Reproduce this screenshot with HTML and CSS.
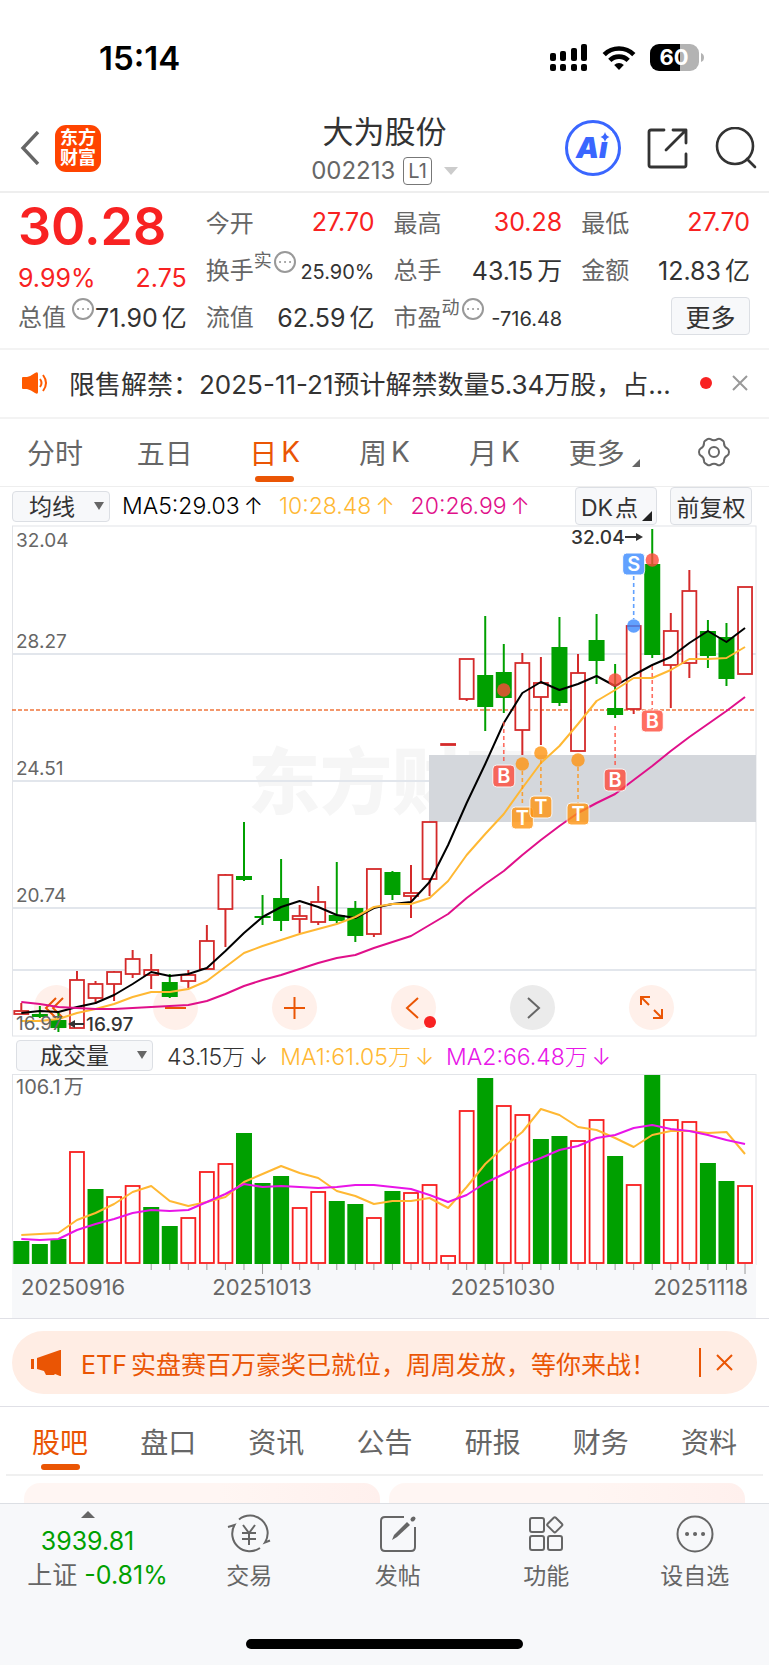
FILE: index.html
```html
<!DOCTYPE html>
<html lang="zh-CN">
<head>
  <meta charset="UTF-8" />
  <meta name="viewport" content="width=device-width, initial-scale=1" />
  <title>大为股份 002213</title>
  <link rel="stylesheet" href="styles.css">
</head>
<body>
  <!-- Status bar -->
  <div class="status-bar">
    <span class="status-time">15:14</span>
    <div class="status-icons">
      <svg width="38" height="28" viewBox="0 0 38 28">
        <rect x="0" y="9" width="6" height="8" rx="2"/><rect x="10" y="7" width="6" height="10" rx="2"/>
        <rect x="21" y="4" width="6" height="13" rx="2"/><rect x="31" y="0" width="6" height="17" rx="2"/>
        <rect x="0" y="20" width="6" height="7" rx="2"/><rect x="10" y="20" width="6" height="7" rx="2"/>
        <rect x="21" y="20" width="6" height="7" rx="2"/><rect x="31" y="20" width="6" height="7" rx="2"/>
      </svg>
      <svg width="34" height="26" viewBox="0 0 34 26" fill="none" stroke="#000" stroke-width="4.6">
        <path d="M2.2 9.6a21 21 0 0 1 29.6 0"/><path d="M7.8 15.4a13 13 0 0 1 18.4 0"/>
        <path d="M17 25l-4.8-5a7 7 0 0 1 9.6 0z" fill="#000" stroke="none"/>
      </svg>
      <svg width="54" height="28" viewBox="0 0 54 28">
        <path d="M9 0h21v27H9a9 9 0 0 1-9-9V9a9 9 0 0 1 9-9z"/>
        <path d="M30 0h10a9 9 0 0 1 9 9v9a9 9 0 0 1-9 9H30z" fill="#b3b3b3"/>
        <path d="M51 9q3 1 3 4.500t-3 4.500z" fill="#b3b3b3"/>
        <text class="battery-text" x="24" y="21" text-anchor="middle">60</text>
      </svg>
    </div>
  </div>

  <!-- Header -->
  <header class="header">
    <div class="header-left">
      <button class="icon-btn" aria-label="返回">
        <svg width="20" height="34" viewBox="0 0 20 34" fill="none" stroke="#666" stroke-width="3.400"><path d="M18 1L3 17l15 16"/></svg>
      </button>
      <div class="logo"><span>东方</span><span>财富</span></div>
    </div>
    <div class="header-title">
      <h1>大为股份</h1>
      <div class="stock-code">002213 <span class="level">L1</span><i class="caret"></i></div>
    </div>
    <div class="header-right">
      <button class="icon-btn" aria-label="Ai">
        <svg width="56" height="56" viewBox="0 0 56 56">
          <circle cx="28" cy="28" r="26.500" fill="#fff" stroke="#3a66ff" stroke-width="3"/>
          <text class="ai-text" x="11" y="38">Ai</text>
          <rect x="34" y="11" width="13" height="11" fill="#fff"/>
          <path d="M40 12q1 4 4.500 5-3.500 1-4.500 5-1-4-4.500-5 3.500-1 4.500-5z" fill="#3a66ff"/>
        </svg>
      </button>
      <button class="icon-btn" aria-label="分享">
        <svg width="42" height="42" viewBox="0 0 42 42" fill="none" stroke="#333" stroke-width="2.800" stroke-linecap="round" stroke-linejoin="round">
          <path d="M17 3H4q-2 0-2 2v33q0 2 2 2h33q2 0 2-2V27M26 3h13v13M39 3L19 23"/>
        </svg>
      </button>
      <button class="icon-btn" aria-label="搜索">
        <svg width="42" height="42" viewBox="0 0 42 42" fill="none" stroke="#333" stroke-width="2.600" stroke-linecap="round">
          <circle cx="20" cy="19" r="18"/><path d="M32 32l8 8"/>
        </svg>
      </button>
    </div>
  </header>

  <!-- Quote -->
  <section class="quote">
    <div class="price-box">
      <div class="price">30.28</div>
      <div class="change"><span>9.99%</span><span>2.75</span></div>
    </div>
    <div class="cell"><span class="name">今开</span><span class="red">27.70</span></div>
    <div class="cell"><span class="name">最高</span><span class="red">30.28</span></div>
    <div class="cell"><span class="name">最低</span><span class="red">27.70</span></div>
    <div class="cell"><span class="name">换手<sup>实</sup><svg class="tip" viewBox="0 0 22 22"><circle cx="11" cy="11" r="10"/><path d="M6 11h.1M11 11h.1M16 11h.1"/></svg></span><span class="small">25.90%</span></div>
    <div class="cell"><span class="name">总手</span><span>43.15<span class="unit">万</span></span></div>
    <div class="cell"><span class="name">金额</span><span>12.83<span class="unit">亿</span></span></div>
    <div class="cell"><span class="name">总值<svg class="tip tip-far" viewBox="0 0 22 22"><circle cx="11" cy="11" r="10"/><path d="M6 11h.1M11 11h.1M16 11h.1"/></svg></span><span>71.90<span class="unit">亿</span></span></div>
    <div class="cell"><span class="name">流值</span><span>62.59<span class="unit">亿</span></span></div>
    <div class="cell"><span class="name">市盈<sup>动</sup><svg class="tip" viewBox="0 0 22 22"><circle cx="11" cy="11" r="10"/><path d="M6 11h.1M11 11h.1M16 11h.1"/></svg></span><span class="small">-716.48</span></div>
    <div class="cell cell-end"><button class="box-btn more-btn">更多</button></div>
  </section>

  <!-- Notice -->
  <section class="notice">
    <svg width="26" height="22" viewBox="0 0 26 22">
      <path d="M0 6q0-1 1-1h4q4-1 8-4 3-2 3 1v18q0 3-3 1-4-3-8-4H1q-1 0-1-1z" fill="#ff5a00"/>
      <path d="M18 7q3 4 0 8M21 3q6 8 0 16" fill="none" stroke="#ff5a00" stroke-width="2"/>
    </svg>
    <p class="notice-text">限售解禁：2025-11-21预计解禁数量5.34万股，占...</p>
    <i class="dot"></i>
    <button class="icon-btn" aria-label="关闭">
      <svg width="16" height="16" viewBox="0 0 16 16" stroke="#999" stroke-width="2"><path d="M1 1l14 14M15 1L1 15"/></svg>
    </button>
  </section>

  <!-- Period tabs -->
  <nav class="tabs period-tabs">
    <button class="tab">分时</button>
    <button class="tab">五日</button>
    <button class="tab active">日<span class="unit">K</span></button>
    <button class="tab">周<span class="unit">K</span></button>
    <button class="tab">月<span class="unit">K</span></button>
    <button class="tab">更多<i class="corner"></i></button>
    <button class="tab" aria-label="设置">
      <svg width="32" height="32" viewBox="0 0 32 32" fill="none" stroke="#666" stroke-width="2">
        <path d="M12.500 3.200Q16 5.500 19.500 3.200q1.500-1 3 0l2.500 1.600q1 .7 1 2.400 0 3.500 3.200 5.200 1.800 1 1.800 3.600t-1.800 3.600Q26 21.300 26 24.800q0 1.700-1 2.400l-2.500 1.600q-1.500 1-3 0Q16 26.500 12.500 28.800q-1.500 1-3 0L7 27.200q-1-.7-1-2.400 0-3.500-3.200-5.200Q1 18.600 1 16t1.800-3.600Q6 10.700 6 7.200q0-1.700 1-2.400l2.500-1.600q1.500-1 3 0z"/>
        <circle cx="16" cy="16" r="5"/>
      </svg>
    </button>
  </nav>

  <!-- K-line chart -->
  <section class="chart-section">
    <div class="indicator-row">
      <div class="select-box ma-select">
        <select aria-label="均线"><option>均线</option></select>
      </div>
      <span class="ma ma5">MA5:29.03<b>↑</b></span>
      <span class="ma yellow">10:28.48<b>↑</b></span>
      <span class="ma pink">20:26.99<b>↑</b></span>
      <div class="indicator-btns">
        <button class="box-btn dk-btn">DK<span class="unit">点</span><i class="corner"></i></button>
        <button class="box-btn">前复权</button>
      </div>
    </div>
    <div class="kline">
      <div class="chart-tools">
        <button class="tool" aria-label="快退"><svg viewBox="0 0 45 45"><path d="M22 13L12 23l10 10M29 13L19 23l10 10"/></svg></button>
        <button class="tool" aria-label="缩小"><svg viewBox="0 0 45 45"><path d="M12 23h21"/></svg></button>
        <button class="tool" aria-label="放大"><svg viewBox="0 0 45 45"><path d="M12 23h21M22.500 12v22"/></svg></button>
        <button class="tool" aria-label="上一个"><svg viewBox="0 0 45 45"><path d="M27 13L16 23l11 10"/></svg><i class="dot"></i></button>
        <button class="tool gray" aria-label="下一个"><svg viewBox="0 0 45 45"><path d="M18 13l11 10-11 10"/></svg></button>
        <button class="tool" aria-label="全屏"><svg viewBox="0 0 45 45"><path d="M12 20v-8h9M12 12l8 8M33 24v9h-9M33 33l-8-8"/></svg></button>
      </div>
      <svg id="kline" viewBox="12 525 745 512"></svg>
    </div>

    <div class="indicator-row volume-row">
      <div class="select-box vol-select">
        <select aria-label="成交量"><option>成交量</option></select>
      </div>
      <span class="ma">43.15万<b>↓</b></span>
      <span class="ma yellow">MA1:61.05万<b>↓</b></span>
      <span class="ma magenta">MA2:66.48万<b>↓</b></span>
    </div>
    <svg id="volume" viewBox="12 1074 745 244"></svg>
  </section>

  <!-- Promo -->
  <section class="promo">
    <div class="promo-bar">
      <svg width="30" height="26" viewBox="0 0 30 26" fill="#ea5504">
        <path d="M0 9h3v10H0zM6 8L29 0h1v26h-1l-5-2-1 1h-8l-2-4-7-2z"/>
      </svg>
      <a class="promo-text" href="#">ETF<span class="unit">实盘赛百万豪奖已就位，周周发放，等你来战！</span></a>
      <button class="icon-btn promo-close" aria-label="关闭">
        <svg width="17" height="17" viewBox="0 0 17 17" stroke="#ea5504" stroke-width="2"><path d="M1 1l15 15M16 1L1 16"/></svg>
      </button>
    </div>
  </section>

  <!-- Info tabs -->
  <nav class="tabs info-tabs">
    <button class="tab active">股吧</button>
    <button class="tab">盘口</button>
    <button class="tab">资讯</button>
    <button class="tab">公告</button>
    <button class="tab">研报</button>
    <button class="tab">财务</button>
    <button class="tab">资料</button>
  </nav>
  <div class="cards"><div class="card"></div><div class="card"></div></div>

  <!-- Bottom bar -->
  <footer class="bottom">
    <nav class="bottom-nav">
      <button class="index-box">
        <i class="caret-up"></i>
        <span class="green">3939.81</span>
        <span class="index-change">上证 <em class="green">-0.81%</em></span>
      </button>
      <button class="nav-item">
        <svg width="44" height="40" viewBox="0 0 44 40" fill="none" stroke="#666" stroke-width="2">
          <path d="M12 5.500A17.600 17.600 0 0 1 38 28.500l5-2M33 34A17.600 17.600 0 0 1 7.500 11L1 13"/>
          <path d="M16 11l6 8 6-8M15 19h14M15 25h14M22 19v12"/>
        </svg>
        <span>交易</span>
      </button>
      <button class="nav-item">
        <svg width="40" height="40" viewBox="0 0 40 40" fill="none" stroke="#666" stroke-width="2">
          <path d="M26 3H7q-4 0-4 4v26q0 4 4 4h26q4 0 4-4V13"/>
          <path d="M34.500 5.500l1-1" stroke-width="4" stroke-linecap="round"/><path d="M14 26l2-5L29 8l3 3-13 12z" fill="#666" stroke="none"/>
        </svg>
        <span>发帖</span>
      </button>
      <button class="nav-item">
        <svg width="40" height="40" viewBox="0 0 40 40" fill="none" stroke="#666" stroke-width="2">
          <rect x="4" y="4" width="14" height="14" rx="2"/><rect x="4" y="22" width="14" height="14" rx="2"/>
          <rect x="22" y="22" width="14" height="14" rx="2"/><rect x="23" y="5" width="11.500" height="11.500" rx="1.500" transform="rotate(45 28.700 10.800)"/>
        </svg>
        <span>功能</span>
      </button>
      <button class="nav-item">
        <svg width="40" height="40" viewBox="0 0 40 40" fill="none" stroke="#666" stroke-width="2">
          <circle cx="20" cy="20" r="17.500"/><path d="M12 20h.1M20 20h.1M28 20h.1" stroke-width="4" stroke-linecap="round"/>
        </svg>
        <span>设自选</span>
      </button>
    </nav>
    <div class="home-bar"></div>
  </footer>

  <script src="chart.js"></script>
</body>
</html>
```

FILE: styles.css
```css
* {
  box-sizing: border-box;
}

body {
  margin: 0;
  background: #fff;
  color: #333;
  font-family: Inter, "Noto Sans CJK SC", sans-serif;
  font-size: 25px;
}

button {
  padding: 0;
  border: none;
  background: none;
  color: inherit;
  font: inherit;
  cursor: pointer;
}

svg {
  display: block;
  flex-shrink: 0;
}

.icon-btn { display: flex; align-items: center; }
.red { color: #f82222; }
.green { color: #00a000; font-style: normal; }
.yellow { color: #ffb833; }
.pink { color: #e0108a; }
.magenta { color: #e815e8; }
.unit { margin-left: 4px; }

/* Status bar */
.status-bar {
  display: flex;
  justify-content: space-between;
  align-items: center;
  height: 112px;
  padding: 3px 65px 0 99px;
}
.status-time { font-size: 33px; font-weight: 600; color: #000; }
.status-icons { display: flex; align-items: center; gap: 14px; }
.battery-text { font-size: 22px; font-weight: 700; fill: #fff; }

/* Header */
.header {
  display: grid;
  grid-template-columns: 1fr auto 1fr;
  align-items: start;
  height: 81px;
  padding: 0 12px;
  border-bottom: 2px solid #eee;
}
.header-left, .header-right { display: flex; align-items: center; height: 72px; }
.header-left { gap: 15px; padding-left: 8px; }
.header-right { justify-content: flex-end; gap: 26px; }
.logo {
  display: flex;
  flex-direction: column;
  justify-content: center;
  align-items: center;
  width: 46px;
  height: 47px;
  border-radius: 11px;
  background: #ff4400;
  color: #fff;
  font-size: 18px;
  font-weight: 700;
  line-height: 20px;
}
.header-title h1 { margin: 0; font-size: 31px; font-weight: 400; line-height: 40px; text-align: center; }
.stock-code {
  display: flex;
  align-items: center;
  justify-content: center;
  gap: 8px;
  font-size: 24px;
  line-height: 38px;
  color: #666;
}
.level { padding: 0 4px; border: 1px solid #777; border-radius: 4px; font-size: 20px; line-height: 26px; }
.caret { margin-left: 4px; border: 7px solid transparent; border-top: 8px solid #ccc; border-bottom: 0; }
.ai-text { font-size: 29px; font-weight: 900; font-style: italic; fill: #3a66ff; }

/* Quote */
.quote {
  display: grid;
  grid-template-columns: repeat(4, 1fr);
  grid-auto-rows: 47px;
  column-gap: 19px;
  padding: 5px 19px 9px 18px;
  border-bottom: 2px solid #f3f3f3;
}
.price-box { grid-row: span 2; color: #f82222; }
.price { font-size: 52px; font-weight: 600; line-height: 57px; }
.change { display: flex; justify-content: space-between; line-height: 46px; }
.cell { display: flex; justify-content: space-between; align-items: center; white-space: nowrap; }
.cell-end { justify-content: flex-end; }
.name { display: flex; align-items: center; color: #666; font-size: 24px; }
.name sup { align-self: flex-start; margin-right: 2px; font-size: 18px; line-height: 20px; }
.name .tip { align-self: flex-start; width: 22px; height: 22px; fill: none; stroke: #999; stroke-width: 2; stroke-linecap: round; }
.name .tip-far { margin-left: 6px; }
.small { padding-top: 6px; font-size: 20px; }
.box-btn {
  position: relative;
  height: 38px;
  border: 1px solid #dcdfe4;
  border-radius: 4px;
  background: #f7f8fa;
}
.more-btn { width: 79px; }

/* Notice */
.notice {
  display: flex;
  align-items: center;
  height: 69px;
  padding: 0 21px 2px 22px;
  border-bottom: 2px solid #f3f3f3;
}
.notice-text {
  flex: 1;
  margin: 0 20px 0 21px;
  font-size: 26px;
  overflow: hidden;
  white-space: nowrap;
}
.dot { width: 12px; height: 12px; margin-right: 20px; border-radius: 50%; background: #f82222; }

/* Tabs */
.tabs { display: grid; grid-template-columns: repeat(7, 1fr); height: 69px; }
.tab {
  position: relative;
  display: flex;
  justify-content: center;
  align-items: center;
  color: #666;
  font-size: 28px;
}
.tab.active { color: #ea5504; }
.tab.active::after {
  content: "";
  position: absolute;
  bottom: 4px;
  width: 39px;
  height: 6px;
  border-radius: 3px;
  background: #ea5504;
}
.period-tabs { height: 68px; border-bottom: 1px solid #eee; }
.period-tabs .tab { padding-bottom: 2px; }
.corner { border: 4px solid #666; border-top-color: transparent; border-left-color: transparent; }
.tab .corner { align-self: flex-end; margin: 0 0 17px 7px; }
.info-tabs { margin: 0 6px; border-bottom: 2px solid #f0f0f0; }

/* Charts */
.chart-section { padding: 0 12px; border-bottom: 1px solid #e0e0e6; }
.indicator-row { display: flex; align-items: center; height: 38px; }
.select-box { position: relative; height: 31px; margin-right: 12px; }
.select-box select {
  width: 100%;
  height: 100%;
  padding: 0 24px 0 16px;
  border: 1px solid #dcdfe4;
  border-radius: 4px;
  background: #f7f8fa;
  color: #333;
  font: inherit;
  font-size: 23px;
  line-height: 28px;
  appearance: none;
}
.select-box::after {
  content: "";
  position: absolute;
  right: 6px;
  top: 11px;
  border: 5px solid transparent;
  border-top: 8px solid #666;
  border-bottom: 0;
}
.ma-select { width: 98px; }
.vol-select { width: 137px; margin: 0 14px 0 4px; }
.vol-select select { padding-left: 23px; }
.ma { margin-right: 16px; font-size: 23px; font-weight: 300; white-space: nowrap; }
.ma b { margin-left: 4px; font-weight: 300; }
.ma5 { color: #000; }
.volume-row { height: 37px; padding-bottom: 1px; }
.volume-row .ma { margin-right: 12px; }
.indicator-btns { display: flex; gap: 13px; margin-left: auto; padding-right: 5px; }
.indicator-btns .box-btn { width: 82px; font-size: 23px; }
.dk-btn { text-align: left; padding-left: 5px; }
.dk-btn .unit { margin-left: 2px; }
.dk-btn .corner { position: absolute; right: 4px; bottom: 3px; border-width: 5px; border-right-color: #222; border-bottom-color: #222; }
.kline { position: relative; }
#kline, #volume { position: relative; width: 100%; pointer-events: none; }
.chart-tools {
  position: absolute;
  left: 3%;
  bottom: 7px;
  display: flex;
  gap: 74px;
}
.tool { position: relative; width: 45px; height: 45px; border-radius: 50%; background: #fff0ea; }
.tool svg { fill: none; stroke: #ea5504; stroke-width: 2; }
.tool.gray { background: #ebebeb; }
.tool.gray svg { stroke: #666; }
.tool .dot { position: absolute; right: 0; bottom: 2px; margin: 0; }
.frame { fill: none; stroke: #e2e4e8; }
.grid { stroke: #e2e6ec; stroke-width: 2; }
.axis-label { fill: #666; font-size: 19px; }
.volume-label { fill: #666; font-size: 20px; }
.date-label { fill: #666; font-size: 22px; }
.peak-label { fill: #333; font-size: 19px; font-weight: 500; }
.watermark { fill: #f6f6f6; font-size: 72px; font-weight: 900; }
.marker { fill: #fff; font-size: 20px; font-weight: 600; }

/* Promo */
.promo { padding: 12px; border-bottom: 1px solid #e0e0e6; }
.promo-bar {
  display: flex;
  align-items: center;
  height: 63px;
  padding: 0 24px 0 19px;
  border-radius: 32px;
  background: #ffede4;
}
.promo-text { flex: 1; margin-left: 20px; color: #ea5504; text-decoration: none; white-space: nowrap; }
.promo-close { height: 29px; padding-left: 15px; border-left: 2px solid #ea5504; }

/* Cards */
.cards { display: grid; grid-template-columns: 1fr 1fr; gap: 9px; height: 27px; padding: 7px 24px 0; overflow: hidden; }
.card { height: 60px; border-radius: 16px; background: linear-gradient(90deg, #fff6f3 55%, #fff0ed); }

/* Bottom bar */
.bottom { height: 162px; border-top: 1px solid #dcdfe4; background: #f7f8fa; }
.bottom-nav { display: grid; grid-template-columns: 175px repeat(4, 1fr); height: 135px; color: #666; }
.index-box { display: flex; flex-direction: column; align-items: center; padding-top: 7px; line-height: 34px; white-space: nowrap; }
.index-change { padding-left: 20px; }
.caret-up { margin: 0 0 6px; border: 7px solid transparent; border-bottom: 7px solid #666; border-top: 0; }
.nav-item { display: flex; flex-direction: column; align-items: center; gap: 6px; padding-top: 10px; font-size: 23px; line-height: 32px; }
.home-bar { width: 36%; height: 10px; margin: 0 auto; border-radius: 5px; background: #000; }
```

FILE: chart.js
```js
const RED = "#d42a2a";
const GREEN = "#00a000";
const LEFT = 12;
const RIGHT = 756;
const BAR = 16;
const x = i => 21.3 + i * 18.557;

// [color, body top, body bottom, high, low]
const candles = [
  ["r", 1011, 1014, 1003, 1014], ["g", 1014, 1017, 1006, 1018], ["g", 1020, 1028, 1013, 1032], ["r", 980, 1028, 971, 1028],
  ["r", 984, 998, 981, 1004], ["r", 972, 984, 971, 1001], ["r", 959, 974, 950, 978], ["r", 970, 975, 954, 989],
  ["g", 982, 997, 974, 998], ["r", 975, 981, 970, 988], ["r", 941, 969, 925, 969], ["r", 875, 909, 874, 947],
  ["g", 876, 880, 822, 881], ["g", 916, 918, 895, 925], ["g", 898, 921, 859, 931], ["r", 916, 919, 905, 933],
  ["r", 902, 922, 886, 925], ["g", 915, 921, 862, 923], ["g", 908, 936, 901, 942], ["r", 869, 934, 869, 937],
  ["g", 872, 895, 871, 900], ["r", 893, 896, 865, 918], ["r", 822, 879, 822, 896], ["r", 744, 745, 744, 745],
  ["r", 659, 699, 659, 701], ["g", 675, 707, 616, 731], ["g", 672, 698, 644, 713], ["r", 663, 730, 653, 755],
  ["r", 683, 697, 657, 745], ["g", 647, 703, 617, 706], ["r", 673, 751, 654, 751], ["g", 640, 661, 614, 684],
  ["g", 708, 715, 664, 718], ["r", 626, 709, 626, 714], ["g", 564, 655, 529, 658], ["r", 631, 665, 613, 708],
  ["r", 591, 663, 570, 678], ["g", 631, 656, 620, 668], ["g", 637, 679, 623, 686], ["r", 587, 674, 587, 674]
];

const ma5 = [1013, 1011, 1012, 1007, 1003, 995, 984, 972, 976, 974, 968, 951, 933, 917, 907, 901, 907, 915, 918, 908,
  904, 902, 882, 845, 803, 764, 723, 693, 682, 690, 684, 676, 686, 675, 665, 657, 643, 631, 642, 628];
const ma10 = [1021, 1021, 1019, 1013, 1009, 1004, 997, 992, 992, 989, 981, 967, 953, 946, 940, 934, 929, 924, 917, 907,
  904, 904, 898, 881, 855, 834, 814, 788, 763, 746, 724, 701, 690, 678, 678, 670, 659, 659, 658, 647];
const ma20 = [1002, 1004, 1007, 1008, 1009, 1009, 1008, 1007, 1006, 1005, 1001, 994, 986, 980, 975, 969, 963, 958, 955, 948,
  942, 936, 925, 914, 898, 884, 871, 855, 840, 826, 813, 803, 794, 780, 766, 751, 737, 724, 711, 697];

const volumes = [1241, 1244, 1239, 1152, 1189, 1197, 1186, 1207, 1226, 1218, 1172, 1164, 1133, 1183, 1176, 1208, 1192, 1201, 1204, 1218,
  1191, 1193, 1185, 1256, 1111, 1078, 1106, 1115, 1139, 1136, 1141, 1120, 1156, 1185, 1075, 1120, 1122, 1163, 1181, 1186];
const volGreen = [0, 1, 2, 4, 7, 8, 12, 13, 14, 17, 18, 20, 25, 28, 29, 32, 34, 37, 38];
const volMa1 = [1235, 1234, 1233, 1220, 1213, 1204, 1192, 1186, 1201, 1206, 1202, 1197, 1182, 1174, 1166, 1173, 1178, 1191, 1196, 1204,
  1201, 1201, 1198, 1208, 1187, 1164, 1147, 1132, 1109, 1115, 1127, 1130, 1138, 1147, 1135, 1131, 1131, 1133, 1132, 1154];
const volMa2 = [1239, 1240, 1239, 1230, 1224, 1219, 1213, 1210, 1211, 1210, 1202, 1194, 1184, 1187, 1186, 1187, 1188, 1187, 1185, 1185,
  1187, 1189, 1195, 1202, 1195, 1183, 1174, 1165, 1158, 1150, 1146, 1138, 1135, 1128, 1125, 1129, 1131, 1135, 1140, 1144];

// [letter, candle index, dot y, dash start, dash end, label y]
const markers = [
  ["B", 26, 690, 722, 763, 776], ["B", 32, 680, 726, 768, 780], ["B", 34, 560, 666, 710, 721],
  ["T", 27, 764, 771, 806, 818], ["T", 28, 753, 760, 795, 807], ["T", 30, 760, 767, 803, 814],
  ["S", 33, 626, 576, 619, 564]
];
const markerColors = { B: "#ff4a3a", T: "#ff9410", S: "#3a8aff" };

function line(x1, y1, x2, y2, attrs) {
  return `<line x1="${x1}" y1="${y1}" x2="${x2}" y2="${y2}" ${attrs}/>`;
}

function box(cx, top, bottom, color) {
  if (color === GREEN) {
    return `<rect x="${cx - BAR / 2}" y="${top}" width="${BAR}" height="${bottom - top}" fill="${GREEN}"/>`;
  }
  return `<rect x="${cx - BAR / 2 + 1}" y="${top}" width="${BAR - 2}" height="${bottom - top}" fill="#fff" stroke="${color}" stroke-width="1.8"/>`;
}

function curve(values, color) {
  const points = values.map((v, i) => `${x(i)},${v}`).join(" ");
  return `<polyline points="${points}" fill="none" stroke="${color}" stroke-width="2" stroke-linejoin="round"/>`;
}

function drawKline() {
  let s = `<text class="watermark" x="248" y="808">东方财富</text>`;
  s += [654, 781, 908, 970].map(y => line(LEFT, y, RIGHT, y, 'class="grid"')).join("");
  s += `<rect class="frame" x="12.5" y="526" width="743.5" height="510"/>`;
  s += `<rect x="429" y="755" width="327" height="67" fill="#d4d7dc"/>`;
  s += line(LEFT, 710, RIGHT, 710, 'stroke="#f0763c" stroke-width="1.6" stroke-dasharray="4 2"');

  candles.forEach(([c, top, bottom, high, low], i) => {
    const color = c === "r" ? RED : GREEN;
    s += line(x(i), high, x(i), low, `stroke="${color}" stroke-width="2"`);
    s += box(x(i), top, bottom, color);
  });
  s += curve(ma5, "#000") + curve(ma10, "#ffb833") + curve(ma20, "#e0108a");

  markers.forEach(([letter, i, dot, from, to, y]) => {
    const color = markerColors[letter];
    s += `<g opacity="0.8">${line(x(i), from, x(i), to, `stroke="${color}" stroke-width="1.6" stroke-dasharray="4 3"`)}`;
    s += `<circle cx="${x(i)}" cy="${dot}" r="6.7" fill="${color}"/>`;
    s += `<rect x="${x(i) - 11}" y="${y - 11}" width="22" height="22" rx="4" fill="${color}" stroke="#fff"/></g>`;
    s += `<text class="marker" x="${x(i)}" y="${y + 7}" text-anchor="middle">${letter}</text>`;
  });

  [["32.04", 547], ["28.27", 648], ["24.51", 775], ["20.74", 902], ["16.97", 1030]].forEach(([t, y]) => {
    s += `<text class="axis-label" x="16" y="${y}">${t}</text>`;
  });
  s += `<text class="peak-label" x="571" y="544">32.04</text>`;
  s += `<path d="M625 537h14" stroke="#333" stroke-width="2"/><path d="M643 537l-7-4v8z" fill="#333"/>`;
  s += `<text class="peak-label" x="86" y="1031">16.97</text>`;
  s += `<path d="M84 1024H72" stroke="#333" stroke-width="2"/><path d="M68 1024l7-4v8z" fill="#333"/>`;
  document.getElementById("kline").innerHTML = s;
}

function drawVolume() {
  const base = 1264;
  let s = `<rect class="frame" x="12.5" y="1074.5" width="743.5" height="190"/>`;
  s += `<rect x="12" y="${base}" width="744" height="54" fill="#f7f8fa"/>`;
  volumes.forEach((top, i) => {
    s += volGreen.includes(i) ? box(x(i), top, base, GREEN) : box(x(i), top, base - 1, "#f81e1e");
    if (i >= 7) s += line(x(i), base, x(i), i % 13 ? base + 6 : base + 10, 'stroke="#999" stroke-width="1"');
  });
  s += curve(volMa1, "#ffb833") + curve(volMa2, "#e815e8");
  s += `<text class="volume-label" x="16" y="1094">106.1<tspan dx="3">万</tspan></text>`;
  s += `<text class="date-label" x="21" y="1295">20250916</text>`;
  s += `<text class="date-label" x="262" y="1295" text-anchor="middle">20251013</text>`;
  s += `<text class="date-label" x="503" y="1295" text-anchor="middle">20251030</text>`;
  s += `<text class="date-label" x="748" y="1295" text-anchor="end">20251118</text>`;
  document.getElementById("volume").innerHTML = s;
}

drawKline();
drawVolume();
```
